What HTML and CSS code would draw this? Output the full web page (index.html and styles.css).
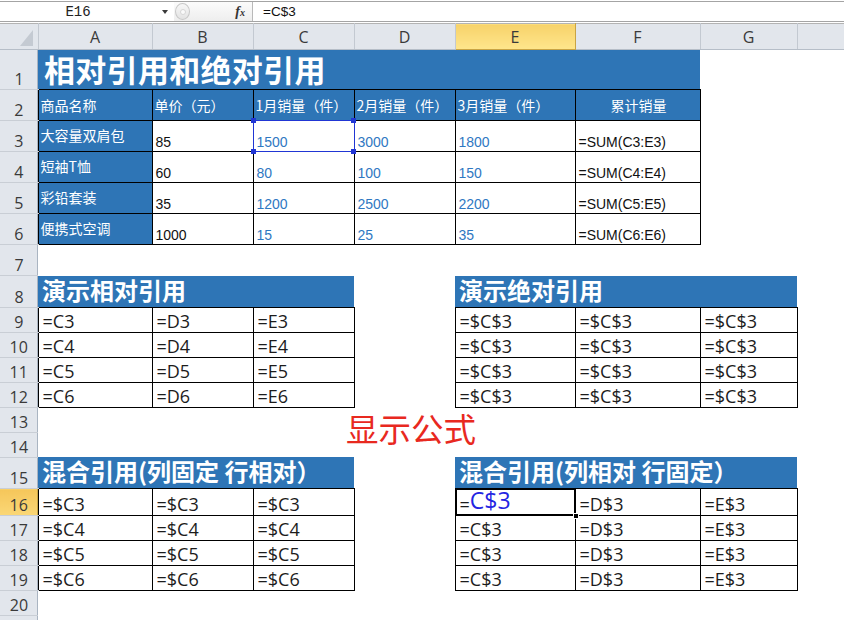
FILE: index.html
```html
<!DOCTYPE html>
<html lang="zh-CN">
<head>
  <meta charset="UTF-8" />
  <title>相对引用和绝对引用</title>
  <link rel="stylesheet" href="styles.css">
</head>
<body>
  <div class="formula-bar">
    <div class="name-box">
      <span class="name">E16</span>
      <span class="arrow"></span>
    </div>
    <div class="tools">
      <span class="grip"><span class="dot"></span></span>
      <span class="fx">f<small>x</small></span>
    </div>
    <div class="formula">=C$3</div>
  </div>

  <div class="book">
    <table class="sheet">
      <colgroup>
        <col class="col-hd">
        <col class="col-a">
        <col class="col-n">
        <col class="col-n">
        <col class="col-n">
        <col class="col-e">
        <col class="col-f">
        <col class="col-g">
        <col class="col-h">
      </colgroup>
      <tr class="hdr">
        <th class="corner"><span class="tri"></span></th>
        <th>A</th><th>B</th><th>C</th><th>D</th><th class="on">E</th><th>F</th><th>G</th><th></th>
      </tr>
      <tr class="r40">
        <th>1</th>
        <td colspan="6" class="title">相对引用和绝对引用</td><td></td><td></td>
      </tr>
      <tr class="r31">
        <th>2</th>
        <td class="bx head">商品名称</td>
        <td class="bx head">单价（元）</td>
        <td class="bx head">1月销量（件）</td>
        <td class="bx head">2月销量（件）</td>
        <td class="bx head">3月销量（件）</td>
        <td class="bx head mid">累计销量</td>
        <td></td><td></td>
      </tr>
      <tr class="r31">
        <th>3</th>
        <td class="bx item">大容量双肩包</td>
        <td class="bx num">85</td>
        <td class="bx num blue ref">1500<span class="knobs"></span></td>
        <td class="bx num blue">3000</td>
        <td class="bx num blue">1800</td>
        <td class="bx num">=SUM(C3:E3)</td>
        <td></td><td></td>
      </tr>
      <tr class="r31">
        <th>4</th>
        <td class="bx item">短袖T恤</td>
        <td class="bx num">60</td>
        <td class="bx num blue">80</td>
        <td class="bx num blue">100</td>
        <td class="bx num blue">150</td>
        <td class="bx num">=SUM(C4:E4)</td>
        <td></td><td></td>
      </tr>
      <tr class="r31">
        <th>5</th>
        <td class="bx item">彩铅套装</td>
        <td class="bx num">35</td>
        <td class="bx num blue">1200</td>
        <td class="bx num blue">2500</td>
        <td class="bx num blue">2200</td>
        <td class="bx num">=SUM(C5:E5)</td>
        <td></td><td></td>
      </tr>
      <tr class="r31">
        <th>6</th>
        <td class="bx item">便携式空调</td>
        <td class="bx num">1000</td>
        <td class="bx num blue">15</td>
        <td class="bx num blue">25</td>
        <td class="bx num blue">35</td>
        <td class="bx num">=SUM(C6:E6)</td>
        <td></td><td></td>
      </tr>
      <tr class="r31">
        <th>7</th>
        <td></td><td></td><td></td><td></td><td></td><td></td><td></td><td></td>
      </tr>
      <tr class="r31">
        <th>8</th>
        <td colspan="3" class="sub">演示相对引用</td>
        <td></td>
        <td colspan="3" class="sub">演示绝对引用</td>
        <td></td>
      </tr>
      <tr class="r25">
        <th>9</th>
        <td class="bx fm">=C3</td><td class="bx fm">=D3</td><td class="bx fm">=E3</td>
        <td></td>
        <td class="bx fm">=$C$3</td><td class="bx fm">=$C$3</td><td class="bx fm">=$C$3</td>
        <td></td>
      </tr>
      <tr class="r25">
        <th>10</th>
        <td class="bx fm">=C4</td><td class="bx fm">=D4</td><td class="bx fm">=E4</td>
        <td></td>
        <td class="bx fm">=$C$3</td><td class="bx fm">=$C$3</td><td class="bx fm">=$C$3</td>
        <td></td>
      </tr>
      <tr class="r25">
        <th>11</th>
        <td class="bx fm">=C5</td><td class="bx fm">=D5</td><td class="bx fm">=E5</td>
        <td></td>
        <td class="bx fm">=$C$3</td><td class="bx fm">=$C$3</td><td class="bx fm">=$C$3</td>
        <td></td>
      </tr>
      <tr class="r25">
        <th>12</th>
        <td class="bx fm">=C6</td><td class="bx fm">=D6</td><td class="bx fm">=E6</td>
        <td></td>
        <td class="bx fm">=$C$3</td><td class="bx fm">=$C$3</td><td class="bx fm">=$C$3</td>
        <td></td>
      </tr>
      <tr class="r25">
        <th>13</th>
        <td></td><td></td><td></td><td></td><td></td><td></td><td></td><td></td>
      </tr>
      <tr class="r25">
        <th>14</th>
        <td></td><td></td><td></td><td></td><td></td><td></td><td></td><td></td>
      </tr>
      <tr class="r31">
        <th>15</th>
        <td colspan="3" class="sub">混合引用(列固定 行相对）</td>
        <td></td>
        <td colspan="3" class="sub">混合引用(列相对 行固定）</td>
        <td></td>
      </tr>
      <tr class="r25">
        <th class="on">16</th>
        <td class="bx fm">=$C3</td><td class="bx fm">=$C3</td><td class="bx fm">=$C3</td>
        <td></td>
        <td class="bx fm sel">=<span class="edit">C$3</span><span class="handle"></span></td>
        <td class="bx fm">=D$3</td><td class="bx fm">=E$3</td>
        <td></td>
      </tr>
      <tr class="r25">
        <th>17</th>
        <td class="bx fm">=$C4</td><td class="bx fm">=$C4</td><td class="bx fm">=$C4</td>
        <td></td>
        <td class="bx fm">=C$3</td><td class="bx fm">=D$3</td><td class="bx fm">=E$3</td>
        <td></td>
      </tr>
      <tr class="r25">
        <th>18</th>
        <td class="bx fm">=$C5</td><td class="bx fm">=$C5</td><td class="bx fm">=$C5</td>
        <td></td>
        <td class="bx fm">=C$3</td><td class="bx fm">=D$3</td><td class="bx fm">=E$3</td>
        <td></td>
      </tr>
      <tr class="r25">
        <th>19</th>
        <td class="bx fm">=$C6</td><td class="bx fm">=$C6</td><td class="bx fm">=$C6</td>
        <td></td>
        <td class="bx fm">=C$3</td><td class="bx fm">=D$3</td><td class="bx fm">=E$3</td>
        <td></td>
      </tr>
      <tr class="r25">
        <th>20</th>
        <td></td><td></td><td></td><td></td><td></td><td></td><td></td><td></td>
      </tr>
      <tr class="r25">
        <th></th>
        <td></td><td></td><td></td><td></td><td></td><td></td><td></td><td></td>
      </tr>
    </table>

    <!-- floating text box on the sheet -->
    <div class="note">显示公式</div>
  </div>
</body>
</html>
```

FILE: styles.css
```css
:root {
  --blue: #2e75b6;
  --num: #2f78c2;
  --hdr: #e2e6ec;
  --hdr-line: #c3c9d1;
  --gold-top: #f7d26a;
  --gold-bot: #ffe68c;
  --gold-line: #c9a444;
}

* {
  box-sizing: border-box;
}

body {
  margin: 0;
  width: 844px;
  height: 620px;
  overflow: hidden;
  background: #fff;
  font-family: "Noto Sans CJK SC", sans-serif;
  color: #1a1a1a;
}

/* formula bar */
.formula-bar {
  display: flex;
  height: 21px;
  margin: 1px 0 1px;
  border-top: 1px solid #a4a4a4;
  border-bottom: 1px solid #a4a4a4;
  background: #fff;
}

.name-box {
  width: 174px;
  display: flex;
  align-items: center;
  padding-right: 6px;
}

.name {
  flex: 1;
  text-align: center;
  padding-right: 6px;
  font-family: "Liberation Mono", monospace;
  font-size: 14px;
  color: #222;
}

.arrow {
  width: 0;
  height: 0;
  border-top: 4px solid #3a3a3a;
  border-left: 3.5px solid transparent;
  border-right: 3.5px solid transparent;
}

.tools {
  width: 79px;
  display: flex;
  align-items: center;
  justify-content: space-between;
  padding-right: 7px;
  background: linear-gradient(#fbfbfb, #eeeeee);
  border-right: 1px solid #b9b9b9;
}

.grip {
  width: 15px;
  height: 17px;
  margin-left: 1px;
  border: 1px solid #c8c8c8;
  border-radius: 50%;
  background: linear-gradient(#f7f7f7, #e3e3e3);
  display: flex;
  align-items: center;
  justify-content: center;
}

.grip .dot {
  width: 6px;
  height: 6px;
  border-radius: 50%;
  border: 1px solid #d6d6d6;
  background: #fafafa;
}

.fx {
  font-family: "Liberation Serif", serif;
  font-style: italic;
  font-weight: bold;
  font-size: 14px;
  color: #333;
}

.fx small {
  font-size: 10px;
}

.formula {
  flex: 1;
  padding-left: 10px;
  display: flex;
  align-items: center;
  font-family: "Liberation Sans", sans-serif;
  font-size: 13.5px;
  color: #111;
}

/* worksheet */
.book {
  position: relative;
}

.sheet {
  border-collapse: collapse;
  table-layout: fixed;
  width: 844px;
}

.col-hd { width: 38px; }
.col-a { width: 114px; }
.col-n { width: 101px; }
.col-e { width: 120px; }
.col-f { width: 125px; }
.col-g { width: 97px; }
.col-h { width: 47px; }

.hdr { height: 25px; }
.r40 { height: 40px; }
.r31 { height: 31px; }
.r25 { height: 25px; }

th,
td {
  padding: 0;
  white-space: nowrap;
  overflow: hidden;
}

.hdr th {
  background: var(--hdr);
  border-top: 1px solid #b3b3b3;
  border-right: 1px solid var(--hdr-line);
  border-bottom: 1px solid #b6bec8;
  font-family: "Open Sans", sans-serif;
  font-weight: normal;
  font-size: 16px;
  color: #3a3a3a;
  padding-top: 1px;
}

.hdr th.on {
  background: linear-gradient(var(--gold-top), var(--gold-bot));
  border-left: 1px solid var(--gold-line);
  border-right: 1px solid var(--gold-line);
  border-bottom: 1px solid var(--gold-line);
}

.hdr th.corner {
  text-align: right;
  vertical-align: bottom;
  padding: 0 5px 3px 0;
}

.tri {
  display: inline-block;
  width: 0;
  height: 0;
  border-left: 13px solid transparent;
  border-bottom: 16px solid #c4cad2;
  vertical-align: bottom;
}

tr:not(.hdr) th {
  background: var(--hdr);
  border-bottom: 1px solid #c9ced5;
  box-shadow: inset -1px 0 #a9b4c1;
  font-family: "Open Sans", sans-serif;
  font-weight: normal;
  font-size: 16px;
  line-height: 20px;
  color: #3a3a3a;
  text-align: center;
  vertical-align: bottom;
}

tr:not(.hdr) th.on {
  background: linear-gradient(#f5c65a, #fad776);
  box-shadow: inset -1px 0 var(--gold-line);
}

/* bordered cells */
.bx {
  border: 1px solid #000;
}

.title {
  background: var(--blue);
  color: #fff;
  font-weight: bold;
  font-size: 31px;
  line-height: 34px;
  letter-spacing: 0.3px;
  padding: 0 0 2px 6px;
  vertical-align: middle;
  overflow: visible;
}

.sub {
  background: var(--blue);
  color: #fff;
  font-weight: bold;
  font-size: 24px;
  line-height: 28px;
  padding: 0 0 3px 4px;
  vertical-align: bottom;
  overflow: visible;
}

.head {
  background: var(--blue);
  color: #fff;
  font-size: 14px;
  padding-left: 2px;
  vertical-align: middle;
}

.head.mid {
  text-align: center;
}

.item {
  background: var(--blue);
  color: #fff;
  font-size: 14px;
  padding: 0 0 2px 2px;
  vertical-align: middle;
}

.num {
  font-family: "Liberation Sans", sans-serif;
  font-size: 14px;
  line-height: 17px;
  padding-left: 3px;
  vertical-align: bottom;
  color: #111;
}

.num.blue {
  color: var(--num);
}

.fm {
  font-family: "Open Sans", sans-serif;
  font-size: 18px;
  line-height: 22px;
  padding-left: 4px;
  vertical-align: bottom;
  color: #1c1c1c;
}

/* reference highlight around C3 */
.ref {
  position: relative;
  overflow: visible;
}

.ref::after {
  content: "";
  position: absolute;
  left: -1px;
  top: -1px;
  right: -1px;
  bottom: -1px;
  border: 1px solid #2136d4;
}

.knobs {
  position: absolute;
  left: -3px;
  top: -3px;
  width: 5px;
  height: 5px;
  background: #2136d4;
  box-shadow: 100px 0 #2136d4, 0 31px #2136d4, 100px 31px #2136d4;
  z-index: 2;
}

/* active cell in edit mode */
.sel {
  position: relative;
  overflow: visible;
}

.sel::after {
  content: "";
  position: absolute;
  left: -1px;
  top: -1px;
  right: -1px;
  bottom: -1px;
  border: 2px solid #000;
}

.edit {
  font-size: 23px;
  line-height: 22px;
  color: #2424e2;
  vertical-align: 2px;
}

.handle {
  position: absolute;
  right: -4px;
  bottom: -4px;
  width: 6px;
  height: 6px;
  background: #000;
  border: 1px solid #fff;
  z-index: 2;
}

.note {
  position: absolute;
  left: 346px;
  top: 389px;
  font-size: 32.5px;
  line-height: 1;
  color: #e8291f;
}
```
